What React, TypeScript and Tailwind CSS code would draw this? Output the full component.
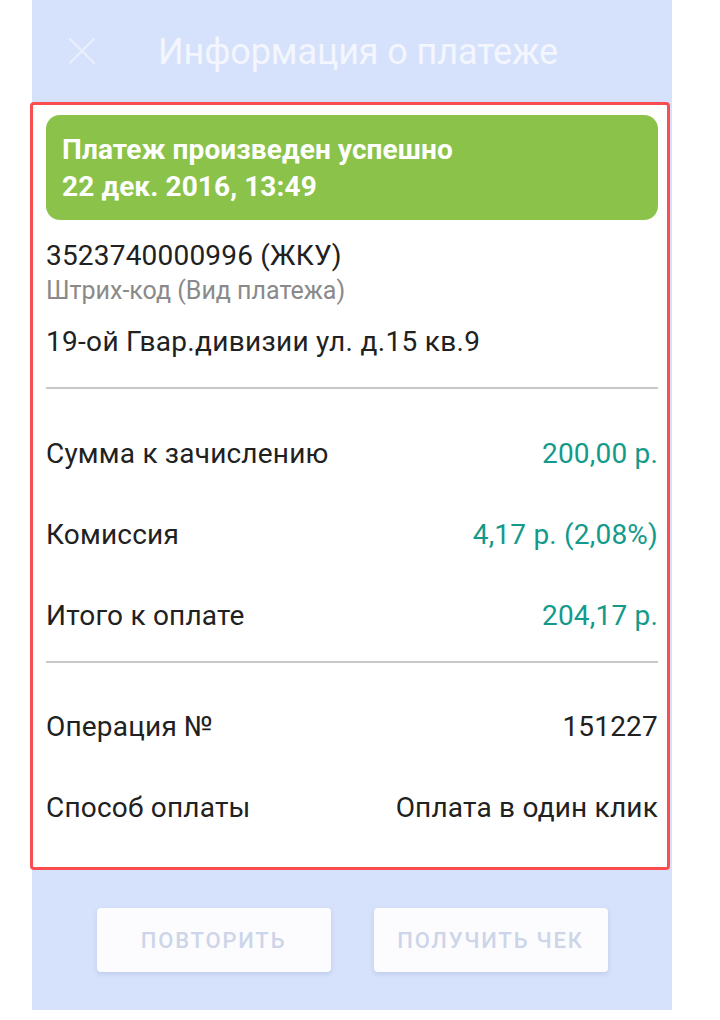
const amounts = [
  { label: 'Сумма к зачислению', value: '200,00 р.' },
  { label: 'Комиссия', value: '4,17 р. (2,08%)' },
  { label: 'Итого к оплате', value: '204,17 р.' },
];

const details = [
  { label: 'Операция №', value: '151227' },
  { label: 'Способ оплаты', value: 'Оплата в один клик' },
];

function Row({ label, value, accent }: { label: string; value: string; accent?: boolean }) {
  return (
    <div className="flex h-[81px] items-center justify-between text-[28px] leading-[34px] tracking-[0.2px]">
      <span className="text-[#212121]">{label}</span>
      <span className={accent ? 'text-[#139a8b]' : 'text-[#212121]'}>{value}</span>
    </div>
  );
}

export default function App() {
  return (
    <div className="min-h-[1020px] bg-white font-['Roboto',_'Noto_Sans',_sans-serif]">
      <div className="ml-[32px] flex h-[1010px] w-[640px] flex-col bg-[#d6e2fb]">
        {/* header */}
        <div className="flex h-[102px] shrink-0 items-center pl-[37px]">
          <svg width="26" height="26" viewBox="0 0 26 26" className="text-[#e9effc]">
            <path d="M1 1L25 25M25 1L1 25" stroke="currentColor" strokeWidth="2.2" strokeLinecap="round" />
          </svg>
          <h1 className="ml-[63px] mt-[2px] text-[36px] leading-[40px] tracking-[-0.1px] text-[#f3f6fe]">Информация о платеже</h1>
        </div>

        {/* card */}
        <div className="ml-[-2px] h-[768px] w-[640px] shrink-0 rounded-[4px] border-[3px] border-[#fb4c4f] bg-white pt-[10px] pl-[13px] pr-[9px]">
          <div className="flex h-[105px] flex-col justify-center rounded-[14px] bg-[#8bc34a] pl-[16px] text-[28px] font-bold leading-[37px] tracking-[0.1px] text-white">
            <p>Платеж произведен успешно</p>
            <p>22 дек. 2016, 13:49</p>
          </div>

          <div className="mt-[19px]">
            <p className="text-[28px] leading-[34px] tracking-[0.2px] text-[#212121]">3523740000996 (ЖКУ)</p>
            <p className="mt-[3px] text-[25px] leading-[30px] text-[#8a8a8a]">Штрих-код (Вид платежа)</p>
            <p className="mt-[19px] text-[28px] leading-[34px] tracking-[0.3px] text-[#212121]">19-ой Гвар.дивизии ул. д.15 кв.9</p>
          </div>

          <div className="mt-[28px] h-[2px] bg-[#c8c8c8]" />

          <div className="mt-[24px]">
            {amounts.map((a) => (
              <Row key={a.label} label={a.label} value={a.value} accent />
            ))}
          </div>

          <div className="mt-[5px] h-[2px] bg-[#c8c8c8]" />

          <div className="mt-[23px]">
            {details.map((d) => (
              <Row key={d.label} label={d.label} value={d.value} />
            ))}
          </div>
        </div>

        {/* actions */}
        <div className="mt-[38px] flex justify-center gap-[43px]">
          <button className="h-[64px] w-[234px] rounded-[4px] bg-[#fcfcfe] text-[22px] font-medium tracking-[1.8px] text-[#cdd5e9] shadow-[0_2px_4px_rgba(120,140,190,0.25)]">
            ПОВТОРИТЬ
          </button>
          <button className="h-[64px] w-[234px] rounded-[4px] bg-[#fcfcfe] text-[22px] font-medium tracking-[1.8px] text-[#cdd5e9] shadow-[0_2px_4px_rgba(120,140,190,0.25)]">
            ПОЛУЧИТЬ ЧЕК
          </button>
        </div>
      </div>
    </div>
  );
}
